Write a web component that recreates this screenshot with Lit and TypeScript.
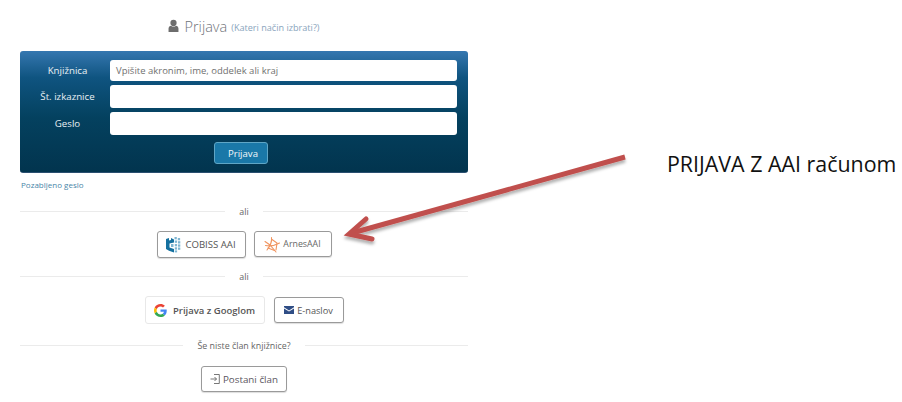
import { LitElement, html, css } from "lit";
import { customElement } from "lit/decorators.js";

@customElement("app-root")
export class AppRoot extends LitElement {
  static styles = css`
    :host { display: block; width: 902px; height: 402px; position: relative; overflow: hidden; background: #fff; font-family: "Open Sans", sans-serif; color: #555; }
    .col { width: 448px; margin-left: 20px; display: flex; flex-direction: column; padding-top: 14px; }
    .title { height: 24px; margin-bottom: 13px; display: flex; justify-content: center; align-items: center; gap: 5px; font-size: 14.5px; font-weight: 300; color: #6f747a; box-sizing: border-box; }
    .title svg { width: 11px; height: 14px; }
    .title small { font-size: 9.1px; font-weight: 400; color: #8aa5bd; margin-left: -1px; padding-top: 2px; }
    .box { height: 122px; box-sizing: border-box; border-radius: 3px; background: linear-gradient(#3577b0 0%, #0f5480 22%, #04415f 55%, #02344e 100%); padding: 9px 11px 0 0; display: flex; flex-direction: column; border-bottom: 1px solid #2a4f70; }
    .row { display: grid; grid-template-columns: 90px 1fr; align-items: center; }
    .r1 { height: 21px; margin-bottom: 4px; }
    .r2 { height: 23px; margin-bottom: 4px; }
    .r3 { height: 23px; margin-bottom: 7px; }
    .row label { color: #e9f0f4; font-size: 9.7px; text-align: center; padding-left: 5px; }
    .input { height: 100%; background: #fff; border-radius: 3px; font-size: 9.5px; color: #707070; padding-left: 6px; display: flex; align-items: center; box-sizing: border-box; }
    .submit-wrap { display: flex; justify-content: center; padding-left: 5px; }
    .submit { width: 54px; height: 22px; box-sizing: border-box; border: 1px solid #5fa6c6; border-radius: 3px; background: #1a78a8; color: #f2f7fa; font-size: 9.6px; display: flex; align-items: center; justify-content: center; padding-left: 4px; }
    .forgot { font-size: 8px; color: #4a86a8; margin-top: 6px; height: 11px; line-height: 11px; padding-left: 1px; }
    .divider { display: flex; align-items: center; gap: 14px; font-size: 8.9px; color: #666; height: 12px; }
    .divider::before, .divider::after { content: ""; flex: 1; border-top: 1px solid #ebebeb; }
    .d1 { margin-top: 15px; }
    .d2 { margin-top: 12px; }
    .d3 { margin-top: 15px; }
    .buttons { display: flex; justify-content: center; align-items: center; }
    .b1 { margin-top: 14px; height: 27px; gap: 8px; }
    .b2 { margin-top: 14px; height: 28px; gap: 9px; }
    .b3 { margin-top: 15px; height: 26px; }
    .btn { box-sizing: border-box; border: 1px solid #9a9a9a; border-radius: 3px; display: flex; align-items: center; justify-content: center; background: #fff; box-shadow: 0 1px 1px #ddd; color: #555; font-size: 9.5px; height: 100%; }
    .cobiss { width: 89px; gap: 4px; font-size: 9.6px; }
    .arnes { width: 78px; gap: 2px; font-size: 8.8px; margin-top: -1px; color: #666; height: 26px; }
    .google { width: 120px; height: 28px; gap: 6px; border: 1px solid #e8e8e8; box-shadow: none; font-weight: 600; font-size: 9.5px; color: #555; }
    .email { width: 70px; height: 26px; gap: 3px; font-size: 9.2px; }
    .postani { width: 86px; gap: 3px; font-size: 9.8px; color: #5a5560; }
    .arrow { position: absolute; left: 340px; top: 140px; }
    .note { position: absolute; left: 667px; top: 150px; font-size: 21.4px; line-height: 28px; color: #111; white-space: nowrap; }
  `;

  render() {
    return html`
      <div class="col">
        <div class="title">
          <svg viewBox="0 0 12 14"><circle cx="6" cy="3.6" r="3.4" fill="#6d6d6d"/><path d="M0.6 13.6V9.6C0.6 7.8 2 6.8 3.2 6.6 4.8 8 7.2 8 8.8 6.6 10 6.8 11.4 7.8 11.4 9.6V13.6Z" fill="#6d6d6d"/></svg>
          <span>Prijava</span><small>(Kateri način izbrati?)</small>
        </div>
        <div class="box">
          <div class="row r1"><label>Knjižnica</label><div class="input">Vpišite akronim, ime, oddelek ali kraj</div></div>
          <div class="row r2"><label>Št. izkaznice</label><div class="input"></div></div>
          <div class="row r3"><label>Geslo</label><div class="input"></div></div>
          <div class="submit-wrap"><div class="submit">Prijava</div></div>
        </div>
        <div class="forgot">Pozabljeno geslo</div>
        <div class="divider d1">ali</div>
        <div class="buttons b1">
          <div class="btn cobiss">
            <svg width="15" height="17" viewBox="0 0 15 17"><path d="M0 3 3 2V4.500L5 4 5 2 8 3.500V6.500L3.500 7.500V11.500L8 13V16.500L3 14.800 0 13Z" fill="#14709f"/><g fill="#7fb6d2"><rect x="8.500" y="1" width="2.300" height="2.300"/><rect x="11.800" y="2" width="2.300" height="2.300"/><rect x="8.800" y="4.500" width="2.300" height="2.300"/><rect x="12" y="5.200" width="2.300" height="2.300"/><rect x="5" y="8" width="2.500" height="3"/><rect x="8.800" y="8" width="2.300" height="2.300"/><rect x="12" y="8.400" width="2.300" height="2.300"/><rect x="8.800" y="11.300" width="2.300" height="2.300"/><rect x="12" y="11.500" width="2.300" height="2.300"/><rect x="8.800" y="14.400" width="2.300" height="2"/></g></svg>
            COBISS AAI
          </div>
          <div class="btn arnes">
            <svg width="17" height="17" viewBox="0 0 17 17" fill="none" stroke="#f0945f" stroke-width="1.100" stroke-linecap="round"><path d="M1 5.500 6 9 12 16"/><path d="M7.500 1.500C8 5 7 9 3 14"/><path d="M1.500 9.500C6 10.500 11 9.500 15.500 7"/><path d="M8 3.500 13 7 12 14"/><path d="M4 12 10.500 14.500"/></svg>
            ArnesAAI
          </div>
        </div>
        <div class="divider d2">ali</div>
        <div class="buttons b2">
          <div class="btn google">
            <svg width="13" height="13" viewBox="0 0 48 48"><path fill="#EA4335" d="M24 9.500c3.500 0 6.700 1.200 9.200 3.600l6.900-6.900C35.900 2.400 30.500 0 24 0 14.600 0 6.500 5.400 2.600 13.200l8 6.200C12.400 13.700 17.700 9.500 24 9.500z"/><path fill="#4285F4" d="M47 24.500c0-1.600-.1-3.100-.4-4.500H24v9h12.900c-.6 3-2.200 5.500-4.700 7.200l7.700 6c4.500-4.200 7.100-10.300 7.100-17.700z"/><path fill="#FBBC05" d="M10.500 28.600c-.5-1.500-.8-3-.8-4.600s.3-3.100.8-4.600l-8-6.200C.9 16.500 0 20.100 0 24s.9 7.500 2.600 10.800l7.900-6.200z"/><path fill="#34A853" d="M24 48c6.500 0 11.900-2.100 15.900-5.800l-7.700-6c-2.200 1.400-4.900 2.300-8.200 2.300-6.300 0-11.600-4.200-13.500-9.900l-8 6.200C6.500 42.600 14.600 48 24 48z"/></svg>
            Prijava z Googlom
          </div>
          <div class="btn email">
            <svg width="10" height="8" viewBox="0 0 10 8"><path d="M0 0H10V1.300L5 4.400 0 1.300Z" fill="#2f4d85"/><path d="M0 2.400 5 5.500 10 2.400V8H0Z" fill="#2f4d85"/></svg>
            E-naslov
          </div>
        </div>
        <div class="divider d3">Še niste član knjižnice?</div>
        <div class="buttons b3">
          <div class="btn postani">
            <svg width="10" height="10" viewBox="0 0 10 10" fill="none" stroke="#555" stroke-width=".8"><path d="M4 .5H9.300V9.500H4"/><path d="M.5 5H6.500M4.500 3 6.500 5 4.500 7"/></svg>
            Postani član
          </div>
        </div>
      </div>
      <svg class="arrow" width="300" height="110" viewBox="0 0 300 110">
        <defs><filter id="s" x="-10%" y="-30%" width="120%" height="160%"><feDropShadow dx="0" dy="3" stdDeviation="1.500" flood-color="#000" flood-opacity=".3"/></filter></defs>
        <g filter="url(#s)" fill="none" stroke="#c0504d" stroke-width="5">
          <path d="M285 17 12 93" />
          <path d="M26 79 9 94 32 99" stroke-linecap="round"/>
        </g>
      </svg>
      <div class="note">PRIJAVA Z AAI računom</div>
    `;
  }
}
